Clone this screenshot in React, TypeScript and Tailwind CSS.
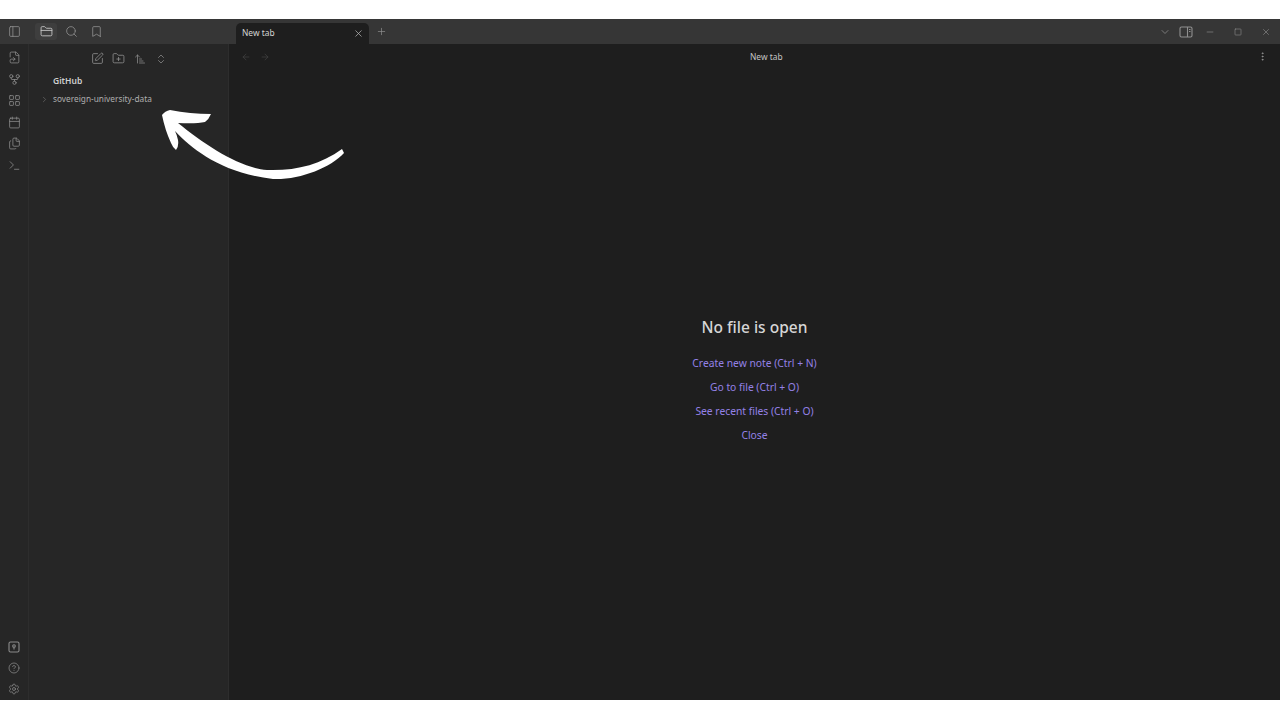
import {
  ArrowLeft,
  ArrowRight,
  ArrowUpNarrowWide,
  Bookmark,
  Calendar,
  ChevronDown,
  ChevronRight,
  ChevronsUpDown,
  CircleHelp,
  Files,
  FileSymlink,
  FolderClosed,
  FolderPlus,
  GitFork,
  LayoutGrid,
  Minus,
  MoreVertical,
  PanelLeft,
  Plus,
  Search,
  Settings,
  Square,
  SquarePen,
  Terminal,
  X,
} from "lucide-react";

const ribbonTop = [FileSymlink, GitFork, LayoutGrid, Calendar, Files, Terminal];
const emptyActions = [
  "Create new note (Ctrl + N)",
  "Go to file (Ctrl + O)",
  "See recent files (Ctrl + O)",
  "Close",
];

function Arrow() {
  return (
    <svg
      className="absolute left-[155px] top-[105px] pointer-events-none"
      width="195"
      height="80"
      viewBox="155 105 195 80"
    >
      <path
        fill="#ffffff"
        d="M342 149 C320 165 295 171 267 170 C240 168 205 145 178 123 Q196 124 205 122 Q209 119 211 114 Q190 114 170 110 Q165 111 162 115 Q165 130 171 143 Q173 148 176 150 Q179 146 178 140 Q177 135 175 131 C193 150 222 173 273 179 C300 180 330 168 344 153 Z"
      />
    </svg>
  );
}

// vault switcher, a rounded square with a small key in it
function VaultIcon() {
  return (
    <svg width="12" height="12" viewBox="0 0 12 12" fill="none" stroke="currentColor" strokeWidth="1.1">
      <rect x="1" y="1" width="10" height="10" rx="1.5" />
      <circle cx="6" cy="5" r="1.3" />
      <path d="M6 6.3V8.5" />
    </svg>
  );
}

function SplitIcon() {
  return (
    <svg className="ml-[8px]" width="14" height="14" viewBox="0 0 14 14" fill="none" stroke="currentColor" strokeWidth="1.1">
      <rect x="1" y="2" width="12" height="10" rx="1.5" />
      <path d="M8.5 2V12" />
      <path d="M10 4.5H11.5M10 6.5H11.5" />
    </svg>
  );
}

export default function App() {
  return (
    <div className="relative h-[720px] w-[1280px] overflow-hidden bg-white pt-[19px] pb-[20px] font-['Noto_Sans',sans-serif]">
      <div className="flex h-full flex-col bg-[#262626]">
        {/* title bar */}
        <div className="flex h-[25px] shrink-0 items-center bg-[#363636] text-[#8f8f8f]">
          <div className="flex w-[29px] shrink-0 justify-center">
            <PanelLeft size={13} strokeWidth={1.5} />
          </div>
          <div className="flex w-[207px] shrink-0 items-center pl-[6px]">
            <div className="flex h-[17px] w-[22px] items-center justify-center rounded-[3px] bg-[#3e3e3e] text-[#c8c8c8]">
              <FolderClosed size={13} strokeWidth={1.6} />
            </div>
            <div className="ml-[8px] flex gap-[12px]">
              <Search size={13} strokeWidth={1.5} />
              <Bookmark size={13} strokeWidth={1.5} />
            </div>
          </div>
          <div className="mt-[4px] flex h-[21px] w-[133px] shrink-0 items-center justify-between rounded-t-[5px] bg-[#1e1e1e] pb-[1px] pl-[6px] pr-[5px]">
            <span className="text-[8.4px] text-[#d4d4d4]">New tab</span>
            <X size={11} strokeWidth={1.6} className="text-[#b5b5b5]" />
          </div>
          <Plus size={11} strokeWidth={1.5} className="ml-[7px]" />
          <div className="ml-auto flex items-center">
            <ChevronDown size={12} strokeWidth={1.5} />
            <SplitIcon />
            <Minus size={10} strokeWidth={1.5} className="ml-[12px]" />
            <Square size={8} strokeWidth={1.8} className="ml-[19px]" />
            <X size={10} strokeWidth={1.5} className="ml-[19px] mr-[9px]" />
          </div>
        </div>

        <div className="flex min-h-0 flex-1">
          {/* ribbon */}
          <div className="flex w-[29px] shrink-0 flex-col items-center justify-between border-r border-[#2d2d2d] pt-[7px] pb-[5px] text-[#8a8a8a]">
            <div className="flex flex-col gap-[8.5px]">
              {ribbonTop.map((Icon, i) => (
                <Icon key={i} size={13} strokeWidth={1.5} />
              ))}
            </div>
            <div className="flex flex-col items-center gap-[9px]">
              <VaultIcon />
              <CircleHelp size={12} strokeWidth={1.5} />
              <Settings size={12} strokeWidth={1.5} />
            </div>
          </div>

          {/* file explorer */}
          <div className="w-[200px] shrink-0 border-r border-[#2d2d2d]">
            <div className="flex h-[29px] items-center pl-[62px] text-[#8f8f8f]">
              <SquarePen size={13} strokeWidth={1.5} />
              <FolderPlus size={13} strokeWidth={1.5} className="ml-[8px]" />
              <ArrowUpNarrowWide size={12} strokeWidth={1.5} className="ml-[9px]" />
              <ChevronsUpDown size={12} strokeWidth={1.5} className="ml-[9px]" />
            </div>
            <div className="mt-[1px] pl-[24px] text-[8.5px] font-semibold leading-[14px] text-[#d0d0d0]">GitHub</div>
            <div className="relative mt-[4px] flex h-[14px] items-center pl-[24px] text-[8.3px] text-[#aeaeae]">
              <ChevronRight size={9} strokeWidth={1.5} className="absolute left-[11px] text-[#7a7a7a]" />
              sovereign-university-data
            </div>
          </div>

          {/* main pane */}
          <div className="flex min-w-0 flex-1 flex-col bg-[#1e1e1e]">
            <div className="flex h-[25px] shrink-0 items-center px-[12px]">
              <div className="flex gap-[9px] text-[#474747]">
                <ArrowLeft size={10} strokeWidth={1.5} />
                <ArrowRight size={10} strokeWidth={1.5} />
              </div>
              <span className="ml-[480px] pt-[1px] text-[8.4px] text-[#c4c4c4]">New tab</span>
              <MoreVertical size={11} strokeWidth={1.8} className="ml-auto text-[#9a9a9a]" />
            </div>
            <div className="flex flex-col items-center pt-[248px]">
              <div className="text-[15.5px] font-medium leading-[20px] text-[#d6d6d6]">No file is open</div>
              <div className="mt-[18px] flex flex-col items-center gap-[8px]">
                {emptyActions.map((label) => (
                  <div key={label} className="text-[10.3px] leading-[16px] text-[#9481e6]">
                    {label}
                  </div>
                ))}
              </div>
            </div>
          </div>
        </div>
      </div>
      <Arrow />
    </div>
  );
}
